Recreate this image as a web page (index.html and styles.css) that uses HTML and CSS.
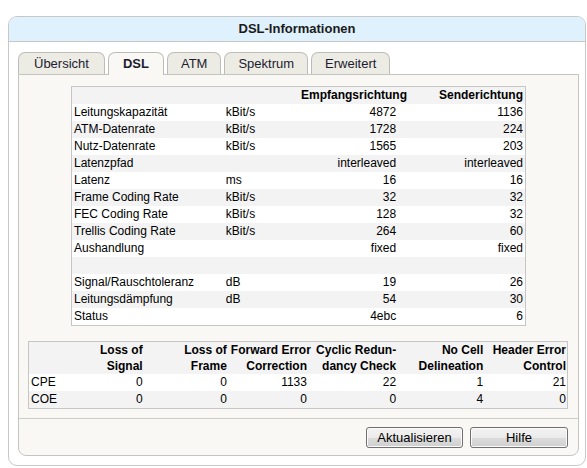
FILE: index.html
```html
<!DOCTYPE html>
<html lang="de">
<head>
  <meta charset="UTF-8">
  <title>DSL-Informationen</title>
  <link rel="stylesheet" href="styles.css">
</head>
<body>
  <div class="window">
    <div class="title">DSL-Informationen</div>
    <div class="content">
      <div class="tabs">
        <div class="tab">Übersicht</div>
        <div class="tab active">DSL</div>
        <div class="tab">ATM</div>
        <div class="tab">Spektrum</div>
        <div class="tab">Erweitert</div>
      </div>

      <div class="panel">
        <table class="dsl">
          <colgroup>
            <col class="c-label"><col class="c-unit"><col class="c-down"><col class="c-up">
          </colgroup>
          <tr class="head"><th></th><th></th><th>Empfangsrichtung</th><th>Senderichtung</th></tr>
          <tr><td>Leitungskapazität</td><td>kBit/s</td><td>4872</td><td>1136</td></tr>
          <tr><td>ATM-Datenrate</td><td>kBit/s</td><td>1728</td><td>224</td></tr>
          <tr><td>Nutz-Datenrate</td><td>kBit/s</td><td>1565</td><td>203</td></tr>
          <tr><td>Latenzpfad</td><td></td><td>interleaved</td><td>interleaved</td></tr>
          <tr><td>Latenz</td><td>ms</td><td>16</td><td>16</td></tr>
          <tr><td>Frame Coding Rate</td><td>kBit/s</td><td>32</td><td>32</td></tr>
          <tr><td>FEC Coding Rate</td><td>kBit/s</td><td>128</td><td>32</td></tr>
          <tr><td>Trellis Coding Rate</td><td>kBit/s</td><td>264</td><td>60</td></tr>
          <tr><td>Aushandlung</td><td></td><td>fixed</td><td>fixed</td></tr>
          <tr><td>&nbsp;</td><td></td><td></td><td></td></tr>
          <tr><td>Signal/Rauschtoleranz</td><td>dB</td><td>19</td><td>26</td></tr>
          <tr><td>Leitungsdämpfung</td><td>dB</td><td>54</td><td>30</td></tr>
          <tr><td>Status</td><td></td><td>4ebc</td><td>6</td></tr>
        </table>

        <table class="errors">
          <colgroup>
            <col class="e0"><col class="e1"><col class="e2"><col class="e3"><col class="e4"><col class="e5"><col class="e6">
          </colgroup>
          <tr class="head">
            <th></th>
            <th>Loss of<br>Signal</th>
            <th>Loss of<br>Frame</th>
            <th>Forward Error<br>Correction</th>
            <th>Cyclic Redun-<br>dancy Check</th>
            <th>No Cell<br>Delineation</th>
            <th>Header Error<br>Control</th>
          </tr>
          <tr><td>CPE</td><td>0</td><td>0</td><td>1133</td><td>22</td><td>1</td><td>21</td></tr>
          <tr><td>COE</td><td>0</td><td>0</td><td>0</td><td>0</td><td>4</td><td>0</td></tr>
        </table>

        <div class="actions">
          <button class="btn btn-refresh">Aktualisieren</button>
          <button class="btn btn-help">Hilfe</button>
        </div>
      </div>
    </div>
  </div>
</body>
</html>
```

FILE: styles.css
```css
html, body {
  margin: 0;
  padding: 0;
  background-color: white;
  font-family: "Liberation Sans", Arial, sans-serif;
  color: black;
}

.window {
  margin: 16px 0 0 8px;
  width: 576px;
  border: 1px solid #c8c8c8;
  border-radius: 9px;
  overflow: hidden;
  background-color: white;
}

.title {
  height: 24px;
  line-height: 24px;
  background-color: #dff1fc;
  border-bottom: 1px solid #c8c8c8;
  text-align: center;
  font-weight: bold;
  font-size: 13px;
  color: #1b1b1b;
}

.content {
  padding: 10px 6px 9px 9px;
}

/* tab row */
.tabs {
  display: flex;
  gap: 3px;
  height: 22px;
  position: relative;
  z-index: 1;
}

.tab {
  box-sizing: border-box;
  height: 22px;
  line-height: 21px;
  padding: 0 13px;
  font-size: 13px;
  color: #1c1c30;
  background-color: #ecebe4;
  border: 1px solid #bdbdb8;
  border-bottom: none;
  border-radius: 7px 7px 0 0;
  cursor: default;
}

.tab:first-child {
  padding: 0 15px;
}

.tab.active {
  height: 23px;
  font-weight: bold;
  background-color: #f9f8f4;
  padding: 0 14px;
}

.panel {
  border: 1px solid #c4c4c0;
  border-radius: 0 0 8px 8px;
  background-color: #f9f8f4;
  padding-top: 11px;
}

/* tables */
table {
  border-collapse: collapse;
  table-layout: fixed;
  background-color: white;
  border: 1px solid #c6c6c6;
  font-size: 12px;
}

td, th {
  padding: 0 2px;
  height: 17px;
  line-height: 17px;
  white-space: nowrap;
  text-align: right;
}

td:first-child {
  text-align: left;
}

th {
  font-weight: bold;
}

tr:nth-child(odd) {
  background-color: #f3f3f3;
}

.dsl {
  width: 455px;
  margin: 0 auto;
}

.dsl td:nth-child(2) {
  text-align: left;
}

.c-label { width: 152px; }
.c-unit { width: 75px; }
.c-down { width: 99px; }
.c-up { width: 127px; }

.errors {
  width: 540px;
  margin: 15px 0 0 9px;
}

.errors th {
  height: 32px;
  line-height: 16px;
  vertical-align: bottom;
}

.errors td:last-child,
.errors th:last-child {
  padding-right: 1px;
}

.e0 { width: 41px; }
.e1 { width: 75px; }
.e2 { width: 84px; }
.e3 { width: 80px; }
.e4 { width: 89px; }
.e5 { width: 87px; }
.e6 { width: 82px; }

/* buttons */
.actions {
  margin-top: 9px;
  border-top: 1px solid #cdcdc8;
  padding: 8px 10px 7px 0;
  display: flex;
  justify-content: flex-end;
  gap: 7px;
}

.btn {
  box-sizing: border-box;
  height: 21px;
  padding: 0;
  font-family: "Liberation Sans", Arial, sans-serif;
  font-size: 13px;
  color: black;
  border: 1px solid #707070;
  border-radius: 3px;
  background: linear-gradient(#f3f3f3 0%, #ebebeb 50%, #dddddd 51%, #cfcfcf 100%);
  box-shadow: inset 0 0 0 1px #fbfbfb;
}

.btn-refresh { width: 97px; }
.btn-help { width: 98px; }
```
